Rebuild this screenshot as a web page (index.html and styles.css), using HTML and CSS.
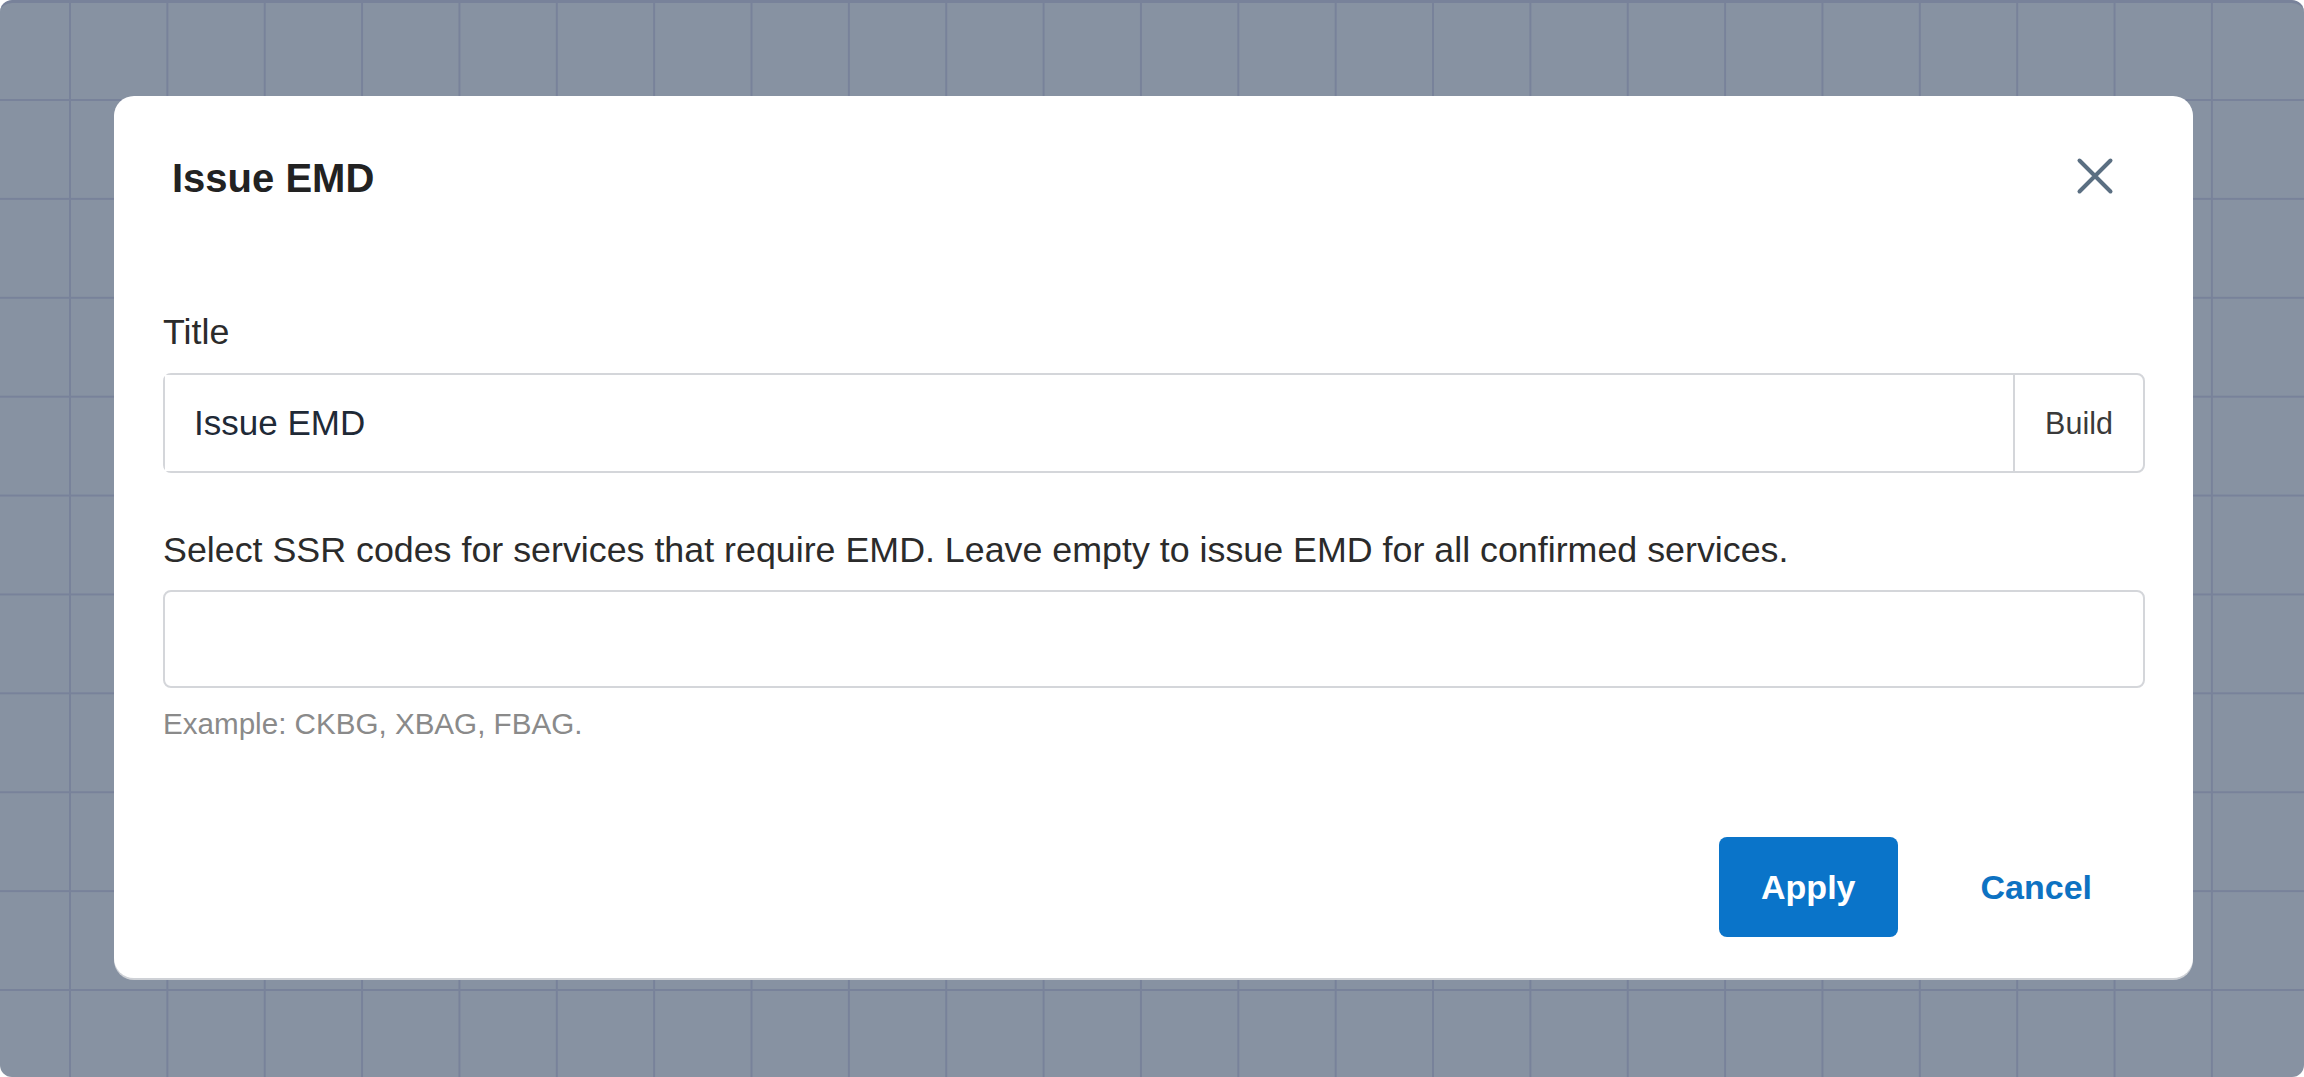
FILE: index.html
```html
<!DOCTYPE html>
<html lang="en">
<head>
<meta charset="utf-8">
<title>Issue EMD</title>
<link rel="stylesheet" href="styles.css">
</head>
<body>
<div class="screen">
  <div class="modal">
    <div class="modal-header">
      <h2 class="modal-title">Issue EMD</h2>
      <button class="close" type="button" aria-label="Close">
        <svg viewBox="0 0 48 48" width="48" height="48">
          <path d="M8.5 8.5 L39.5 39.5 M39.5 8.5 L8.5 39.5" stroke="#5b6f82" stroke-width="4" stroke-linecap="round" fill="none"/>
        </svg>
      </button>
    </div>
    <div class="modal-body">
      <div class="field">
        <label class="label">Title</label>
        <div class="input-group">
          <div class="input">Issue EMD</div>
          <div class="addon">Build</div>
        </div>
      </div>
      <div class="field field-second">
        <label class="label">Select SSR codes for services that require EMD. Leave empty to issue EMD for all confirmed services.</label>
        <div class="input input-plain"></div>
        <div class="hint">Example: CKBG, XBAG, FBAG.</div>
      </div>
    </div>
    <div class="modal-footer">
      <button class="btn btn-primary" type="button">Apply</button>
      <button class="btn btn-link" type="button">Cancel</button>
    </div>
  </div>
</div>
</body>
</html>
```
FILE: styles.css
```css
* {
  box-sizing: border-box;
}

html, body {
  margin: 0;
  padding: 0;
  background: #ffffff;
}

body {
  font-family: "Liberation Sans", Arial, Helvetica, sans-serif;
}

.screen {
  width: 2304px;
  height: 1077px;
  border-radius: 12px;
  border-top: 3px solid #78829a;
  background-color: #8792a2;
  background-image:
    linear-gradient(to right, #78829a 0, #78829a 2px, transparent 2px),
    linear-gradient(to bottom, #78829a 0, #78829a 2px, transparent 2px);
  background-size: 97.36px 98.9px;
  background-position: 69px 96px;
  padding: 93px 0 0 114px;
  overflow: hidden;
}

.modal {
  width: 2079px;
  background: #ffffff;
  border-radius: 20px;
  box-shadow: 0 2px 0 0 #ced1d6;
}

.modal-header {
  display: flex;
  justify-content: space-between;
  align-items: flex-start;
  padding: 54px 74px 0 58px;
}

.modal-title {
  margin: 4px 0 0 0;
  font-size: 40px;
  line-height: 48px;
  font-weight: 700;
  color: #222222;
}

.close {
  width: 48px;
  height: 48px;
  margin-top: 2px;
  padding: 0;
  border: 0;
  background: transparent;
  display: flex;
  align-items: center;
  justify-content: center;
  cursor: pointer;
}

.close svg {
  display: block;
}

.modal-body {
  padding: 108px 48px 0 49px;
}

.field-second {
  margin-top: 55px;
}

.label {
  display: block;
  font-size: 35.8px;
  line-height: 44px;
  color: #2b2b2b;
  margin-bottom: 19px;
}

.field-second .label {
  margin-bottom: 18px;
}

.input-group {
  display: flex;
  height: 100px;
  border: 2px solid #d4d6da;
  border-radius: 8px;
}

.input-group .input {
  flex: 1;
  border: 0;
  border-radius: 0;
  height: auto;
}

.input {
  display: flex;
  align-items: center;
  height: 100px;
  padding: 0 29px;
  font-size: 35px;
  color: #1f2a37;
  border: 2px solid #d4d6da;
  border-radius: 8px;
  background: #ffffff;
}

.input-plain {
  height: 98px;
}

.addon {
  width: 130px;
  border-left: 2px solid #d4d6da;
  display: flex;
  align-items: center;
  justify-content: center;
  font-size: 30.5px;
  color: #3a3a3a;
}

.hint {
  margin-top: 18px;
  font-size: 29.6px;
  line-height: 36px;
  color: #8a8a8a;
}

.modal-footer {
  display: flex;
  justify-content: flex-end;
  gap: 41px;
  padding: 95px 59px 41px 49px;
}

.btn {
  height: 100px;
  padding: 0 42px;
  border: 0;
  border-radius: 8px;
  font-family: "Liberation Sans", Arial, Helvetica, sans-serif;
  font-size: 34px;
  font-weight: 700;
  cursor: pointer;
}

.btn-primary {
  background: #0a74c9;
  color: #ffffff;
}

.btn-link {
  background: transparent;
  color: #0d72c2;
}
```
